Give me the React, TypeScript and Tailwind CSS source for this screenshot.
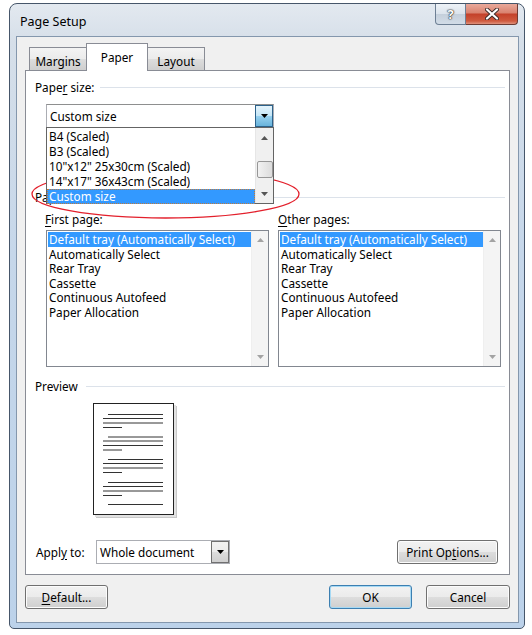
import React from "react";

const font = "font-['Noto_Sans',sans-serif]";

function U({ children }: { children: React.ReactNode }) {
  return <span className="underline underline-offset-2">{children}</span>;
}

function DownArrow({ color = "#000" }: { color?: string }) {
  return (
    <svg width="7" height="4" viewBox="0 0 7 4">
      <path d="M0 0h7L3.5 4z" fill={color} />
    </svg>
  );
}

function UpArrow({ color = "#000" }: { color?: string }) {
  return (
    <svg width="7" height="4" viewBox="0 0 7 4">
      <path d="M0 4h7L3.5 0z" fill={color} />
    </svg>
  );
}

function Heading({ children, gap = "ml-[6px]" }: { children: React.ReactNode; gap?: string }) {
  return (
    <div className="flex items-center h-[15px]">
      <span>{children}</span>
      <div className={`flex-1 h-px bg-[#dce2ea] ${gap}`} />
    </div>
  );
}

function Button({ children, w, def = false }: { children: React.ReactNode; w: string; def?: boolean }) {
  return (
    <div
      className={`${w} h-[24px] rounded-[3px] border flex items-center justify-center ${
        def ? "border-[#3c7fb1] shadow-[inset_0_0_0_1px_#a6d9f4]" : "border-[#707070] shadow-[inset_0_0_0_1px_#fcfcfc]"
      } bg-[linear-gradient(#f2f2f2_0%,#ebebeb_50%,#dddddd_51%,#cfcfcf_100%)]`}
    >
      {children}
    </div>
  );
}

const trays = [
  "Default tray (Automatically Select)",
  "Automatically Select",
  "Rear Tray",
  "Cassette",
  "Continuous Autofeed",
  "Paper Allocation",
];

function TrayList() {
  return (
    <div className="w-[223px] h-[137px] border border-[#828790] bg-white flex">
      <div className="flex-1 pt-px pl-px">
        {trays.map((t, i) => (
          <div
            key={t}
            className={`h-[14.6px] leading-[14.6px] pl-[1px] whitespace-nowrap ${
              i === 0 ? "bg-[#3399ff] text-white" : ""
            }`}
          >
            {t}
          </div>
        ))}
      </div>
      <div className="w-[17px] bg-[#f4f4f4] border-l border-[#efefef] flex flex-col items-center justify-between py-[7px]">
        <UpArrow color="#a3a3a3" />
        <DownArrow color="#a3a3a3" />
      </div>
    </div>
  );
}

function PagePreview() {
  const groups = [414, 436.5, 459, 482];
  return (
    <svg width="86" height="117" viewBox="0 0 86 117">
      <rect x="3" y="3" width="81" height="112" fill="#c9c9c9" />
      <rect x="2" y="2" width="81" height="112" fill="#e2e2e2" />
      <rect x="0.5" y="0.5" width="80" height="111" fill="#fff" stroke="#222" />
      {groups.map((g) => {
        const y = g - 403;
        return (
          <g key={g} stroke="#333" strokeWidth="1">
            <line x1="15" x2="70" y1={y + 0.5} y2={y + 0.5} />
            <line x1="10" x2="70" y1={y + 4.5} y2={y + 4.5} />
            <line x1="10" x2="70" y1={y + 9} y2={y + 9} />
            <line x1="10" x2="29" y1={y + 13.5} y2={y + 13.5} />
          </g>
        );
      })}
      <line x1="15" x2="70" y1="101.5" y2="101.5" stroke="#333" />
    </svg>
  );
}

export default function App() {
  return (
    <div className={`relative w-[532px] h-[635px] bg-white pt-[3px] pl-[9px] text-[11.75px] leading-[15px] text-black ${font}`}>
      <div className="w-[516px] h-[626px] rounded-t-[8px] rounded-b-[5px] border border-[#46566a] bg-[linear-gradient(#e3e9f0_0%,#d6dfe9_6%,#c6d7ea_40%,#bcd2ea_100%)] flex flex-col">
        {/* title bar */}
        <div className="h-[32px] flex items-start">
          <div className="pl-[10px] pt-[10px] text-[12.5px] text-black">Page Setup</div>
          <div className="ml-auto mr-[6px] flex">
            <div className="w-[31px] h-[21px] rounded-bl-[4px] border border-t-0 border-[#6d7f94] bg-[linear-gradient(#eef2f7_0%,#dbe3ec_50%,#c4cfdb_51%,#d2dce7_100%)] flex items-center justify-center">
              <span className="text-white font-bold text-[13px] [text-shadow:0_0_1px_#222,0_0_1px_#222,0_0_2px_#444]">?</span>
            </div>
            <div className="w-[52px] h-[21px] rounded-br-[4px] border border-t-0 border-l-0 border-[#6e3b33] bg-[linear-gradient(#e9a99b_0%,#d9826f_45%,#c4412a_50%,#cf5a3f_85%,#e0917c_100%)] flex items-center justify-center">
              <svg width="14" height="12" viewBox="0 0 14 12">
                <path d="M2 1.5l10 9M12 1.5l-10 9" stroke="#3a2a28" strokeWidth="4" strokeLinecap="round" />
                <path d="M2 1.5l10 9M12 1.5l-10 9" stroke="#fff" strokeWidth="2.2" strokeLinecap="round" />
              </svg>
            </div>
          </div>
        </div>

        {/* client area */}
        <div className="ml-[6px] mr-[5px] mb-[5px] flex-1 border border-[#8497ad] bg-[#f0f0f0] px-[8px] flex flex-col">
          {/* tabs */}
          <div className="mt-[6px] h-[27px] pl-[4px] flex items-end">
            <div className="w-[58px] h-[23px] border border-b-0 border-[#898c95] bg-[linear-gradient(#f3f3f3_0%,#ebebeb_50%,#dddddd_51%,#cfcfcf_100%)] flex items-center justify-center pt-[4px]">
              Margins
            </div>
            <div className="relative z-10 -ml-[1px] -mr-[1px] -mb-[1px] w-[62px] h-[28px] border border-b-0 border-[#898c95] bg-white flex items-start justify-center pt-[6px]">
              Paper
            </div>
            <div className="w-[58px] h-[23px] border border-b-0 border-[#898c95] bg-[linear-gradient(#f3f3f3_0%,#ebebeb_50%,#dddddd_51%,#cfcfcf_100%)] flex items-center justify-center pt-[4px]">
              Layout
            </div>
          </div>

          {/* tab panel */}
          <div className="relative h-[505px] border border-[#898c95] bg-white pl-[9px] pr-[4px] flex flex-col">
            <div className="mt-[9px]">
              <Heading>
                Pape<U>r</U> size:
              </Heading>
            </div>

            <div className="mt-[9px] ml-[11px] w-[228px] h-[24px] border border-[#abadb3] border-t-[#8e8f8f] bg-white flex items-center">
              <span className="pl-[3px] flex-1">Custom size</span>
              <div className="w-[18px] h-[22px] border border-[#2c628b] bg-[linear-gradient(#e5f4fc_0%,#c4e5f6_50%,#98d1ef_51%,#68b3db_100%)] flex items-center justify-center">
                <DownArrow />
              </div>
            </div>

            <div className="mt-[62px]">
              <Heading>Paper source</Heading>
            </div>

            <div className="mt-[7px] ml-[10px] flex">
              <div className="w-[233px]">
                <U>F</U>irst page:
              </div>
              <div>
                <U>O</U>ther pages:
              </div>
            </div>

            <div className="mt-[3px] ml-[11px] flex gap-[9px]">
              <TrayList />
              <TrayList />
            </div>

            <div className="mt-[12px]">
              <Heading gap="ml-[8px]">Preview</Heading>
            </div>

            <div className="mt-[9px] ml-[58px]">
              <PagePreview />
            </div>

            <div className="mt-[20px] flex items-center">
              <span className="ml-[1px] w-[60px]">
                Appl<U>y</U> to:
              </span>
              <div className="w-[134px] h-[24px] border border-[#abadb3] bg-white flex items-center">
                <span className="pl-[3px] flex-1">Whole document</span>
                <div className="w-[18px] h-[22px] border border-[#707070] bg-[linear-gradient(#f2f2f2_0%,#ebebeb_50%,#dddddd_51%,#cfcfcf_100%)] flex items-center justify-center">
                  <DownArrow />
                </div>
              </div>
              <div className="ml-auto mr-[7px]">
                <Button w="w-[101px]">
                  Print Op<U>t</U>ions...
                </Button>
              </div>
            </div>

            {/* open dropdown list */}
            <div className="absolute left-[20px] top-[56px] w-[228px] h-[77px] border border-[#646464] bg-white flex z-20">
              <div className="flex-1 pt-px">
                {["B4 (Scaled)", "B3 (Scaled)", "10\"x12\" 25x30cm (Scaled)", "14\"x17\" 36x43cm (Scaled)"].map((s) => (
                  <div key={s} className="h-[15px] leading-[15px] pl-[2px] whitespace-nowrap">
                    {s}
                  </div>
                ))}
                <div className="h-[15px] leading-[13px] pl-[1px] bg-[#3399ff] text-white border border-dotted border-[#c07a3a]">
                  Custom size
                </div>
              </div>
              <div className="w-[18px] bg-[#f0f0f0] border-l border-[#e6e6e6] flex flex-col items-center pt-[8px] pb-[7px]">
                <UpArrow color="#555" />
                <div className="mt-[21px] w-[16px] h-[17px] rounded-[2px] border border-[#979797] bg-[linear-gradient(90deg,#f2f2f2,#dcdcdc)]" />
                <div className="mt-auto">
                  <DownArrow color="#555" />
                </div>
              </div>
            </div>
          </div>

          {/* bottom buttons */}
          <div className="mt-[10px] flex">
            <Button w="w-[83px]">
              <U>D</U>efault...
            </Button>
            <div className="ml-auto flex gap-[14px]">
              <Button w="w-[83px]" def>
                OK
              </Button>
              <Button w="w-[84px]">Cancel</Button>
            </div>
          </div>
        </div>
      </div>

      {/* red annotation ellipse */}
      <svg className="absolute inset-0 pointer-events-none" width="532" height="635" viewBox="0 0 532 635">
        <ellipse cx="165.5" cy="194" rx="133.5" ry="24" fill="none" stroke="#e3202c" strokeWidth="1.3" />
      </svg>
    </div>
  );
}
